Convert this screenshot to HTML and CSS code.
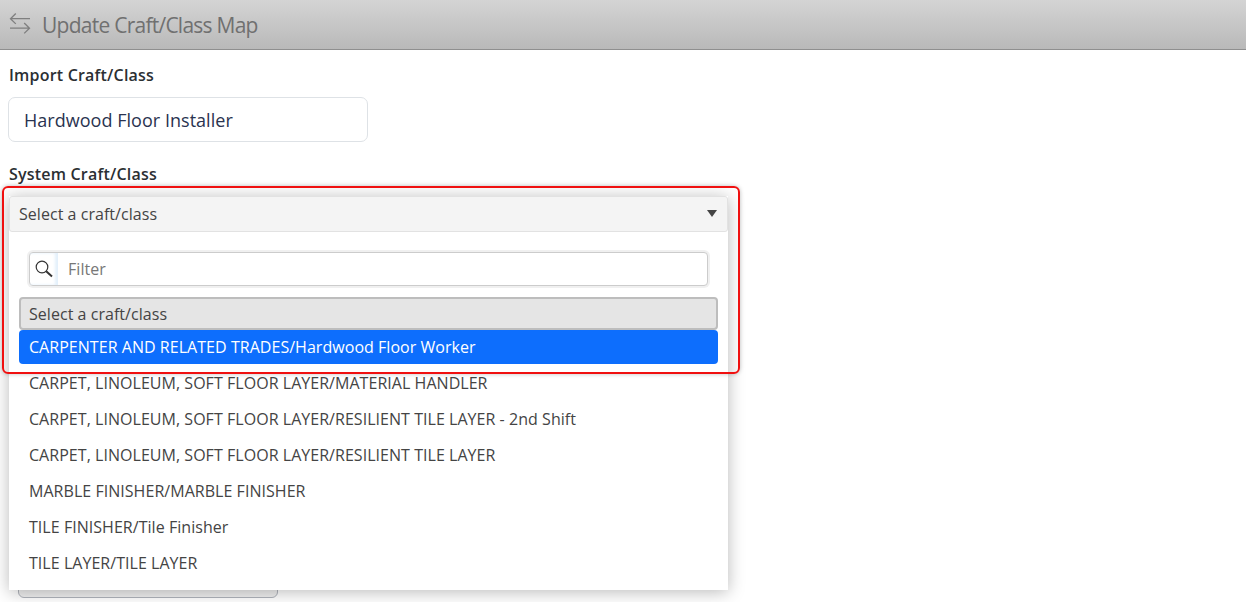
FILE: index.html
```html
<!DOCTYPE html>
<html lang="en">
<head>
    <meta charset="UTF-8">
    <title>Update Craft/Class Map</title>
    <link rel="stylesheet" href="styles.css">
</head>
<body>
    <header class="page-header">
        <svg class="back-icon" width="22" height="22" viewBox="0 0 22 22" fill="none" stroke="#7f7f7f" stroke-width="1.3">
            <path d="M21 6.700H1.500M6.800 1.500 1.500 6.700l5.300 5.200"/>
            <path d="M1 16.200H20.500M15.200 11l5.300 5.200-5.300 5.200"/>
        </svg>
        <h1 class="page-title">Update Craft/Class Map</h1>
    </header>
    <main class="form">
        <div class="field">
            <label class="field-label">Import Craft/Class</label>
            <div class="readonly-input">Hardwood Floor Installer</div>
        </div>
        <div class="field field-select">
            <label class="field-label">System Craft/Class</label>
            <div class="select">
                <div class="select-toggle">
                    <span>Select a craft/class</span>
                    <span class="caret"></span>
                </div>
                <div class="select-menu">
                    <div class="filter">
                        <span class="filter-icon">
                            <svg width="20" height="20" viewBox="0 0 20 20" fill="none" stroke="#333">
                                <circle cx="8" cy="8" r="5.800" stroke-width="1.200"/>
                                <path d="M12.200 12.200 18 17.500" stroke-width="2"/>
                            </svg>
                        </span>
                        <span class="filter-text">Filter</span>
                    </div>
                    <ul class="options">
                        <li class="option option-current">Select a craft/class</li>
                        <li class="option option-active">CARPENTER AND RELATED TRADES/Hardwood Floor Worker</li>
                        <li class="option">CARPET, LINOLEUM, SOFT FLOOR LAYER/MATERIAL HANDLER</li>
                        <li class="option">CARPET, LINOLEUM, SOFT FLOOR LAYER/RESILIENT TILE LAYER - 2nd Shift</li>
                        <li class="option">CARPET, LINOLEUM, SOFT FLOOR LAYER/RESILIENT TILE LAYER</li>
                        <li class="option">MARBLE FINISHER/MARBLE FINISHER</li>
                        <li class="option">TILE FINISHER/Tile Finisher</li>
                        <li class="option">TILE LAYER/TILE LAYER</li>
                    </ul>
                </div>
            </div>
            <div class="highlight-box"></div>
        </div>
        <div class="under-button"></div>
    </main>
</body>
</html>
```
FILE: styles.css
```css
html, body {
    margin: 0;
    padding: 0;
    height: 100%;
    overflow: hidden;
    background: #fff;
    font-family: "Open Sans", "Noto Sans", Arial, sans-serif;
    color: #212529;
}

.page-header {
    height: 49px;
    display: flex;
    align-items: center;
    gap: 11px;
    padding-left: 9px;
    background: linear-gradient(to bottom, #d4d4d4, #b9b9b9);
    border-bottom: 1px solid #8f8f8f;
}

.back-icon {
    flex: none;
    margin-top: -3px;
}

.page-title {
    margin: 0;
    font-size: 21px;
    font-weight: 400;
    letter-spacing: -0.75px;
    color: #707070;
}

.form {
    padding: 15px 8px 0;
}

.field-label {
    display: block;
    font-size: 16px;
    line-height: 20px;
    font-weight: 600;
    letter-spacing: 0.2px;
    color: #2b2f33;
    margin-left: 1px;
}

.readonly-input {
    box-sizing: border-box;
    width: 360px;
    height: 45px;
    margin: 12px 0 22px;
    padding-left: 15px;
    line-height: 45px;
    font-size: 18px;
    letter-spacing: 0.03px;
    color: #2a3350;
    background: #fff;
    border: 1px solid #dee2e6;
    border-radius: 7px;
}

.field-select {
    position: relative;
    z-index: 2;
}

/* open dropdown sits over the rest of the form */
.select {
    position: absolute;
    top: 32px;
    left: 1px;
    width: 719px;
    font-size: 16px;
    letter-spacing: 0.04px;
    box-shadow: 0 2px 16px rgba(0, 0, 0, 0.28);
}

.select-toggle {
    box-sizing: border-box;
    height: 36px;
    display: flex;
    align-items: center;
    justify-content: space-between;
    padding: 0 10px 0 9px;
    color: #444;
    background: #f4f4f4;
    border: 1px solid #e2e2e2;
    border-radius: 3px;
}

.caret {
    width: 0;
    height: 0;
    margin-bottom: 2px;
    border-left: 5px solid transparent;
    border-right: 5px solid transparent;
    border-top: 7px solid #444;
}

.select-menu {
    box-sizing: border-box;
    height: 358px;
    padding: 20px 10px 0;
    background: #fff;
}

.filter {
    display: flex;
    box-sizing: border-box;
    height: 34px;
    margin: 0 10px 11px;
    background: #fff;
    border: 1px solid #ccc;
    border-radius: 4px;
    box-shadow: 0 0 0 2px #f0f0f0;
}

.filter-icon {
    width: 28px;
    display: flex;
    align-items: center;
    justify-content: center;
    box-shadow: inset -3px 0 3px #e3f0fb;
}

.filter-text {
    padding-left: 10px;
    line-height: 32px;
    font-size: 16px;
    color: #777;
}

.options {
    margin: 0;
    padding: 0;
    list-style: none;
}

.option {
    height: 36px;
    line-height: 36px;
    padding-left: 10px;
    color: #444;
    white-space: nowrap;
}

.option-current {
    box-sizing: border-box;
    height: 33px;
    line-height: 31px;
    padding-left: 8px;
    background: #e5e5e5;
    border: 2px solid #bdbdbd;
    border-radius: 4px;
}

.option-active {
    height: 34px;
    line-height: 35px;
    margin-bottom: 1px;
    color: #fff;
    background: #0d6efd;
    border-radius: 4px;
}

.highlight-box {
    position: absolute;
    left: -6px;
    top: 22px;
    width: 734px;
    height: 184px;
    border: 2px solid #f01010;
    border-radius: 6px;
    box-shadow: 0 0 4px rgba(0, 0, 0, 0.25);
    pointer-events: none;
}

.under-button {
    box-sizing: border-box;
    width: 260px;
    height: 34px;
    margin: 380px 0 0 10px;
    background: #f0f0f0;
    border: 1px solid #b0b4bc;
    border-radius: 6px;
}
```
